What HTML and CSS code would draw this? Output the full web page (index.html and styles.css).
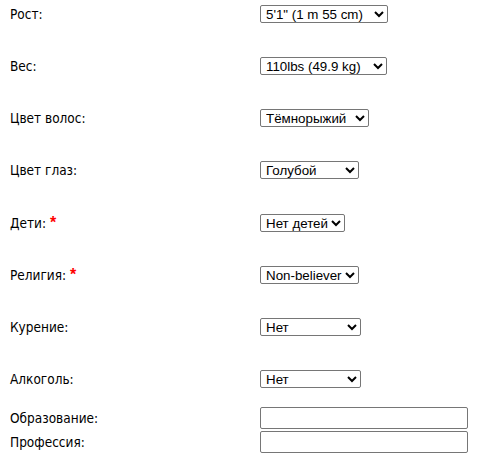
FILE: index.html
```html
<!DOCTYPE html>
<html>
<head>
<meta charset="utf-8">
<link rel="stylesheet" href="styles.css">
</head>
<body>
<div class="form">
  <div class="row"><div class="label">Рост:</div><div class="field"><select class="w128"><option>5'1" (1 m 55 cm)</option></select></div></div>
  <div class="row"><div class="label">Вес:</div><div class="field"><select class="w127"><option>110lbs (49.9 kg)</option></select></div></div>
  <div class="row"><div class="label">Цвет волос:</div><div class="field"><select class="w109"><option>Тёмнорыжий</option></select></div></div>
  <div class="row"><div class="label">Цвет глаз:</div><div class="field"><select class="w99"><option>Голубой</option></select></div></div>
  <div class="row"><div class="label">Дети: <span class="req">*</span></div><div class="field"><select class="w85"><option>Нет детей</option></select></div></div>
  <div class="row"><div class="label">Религия: <span class="req">*</span></div><div class="field"><select class="w99"><option>Non-believer</option></select></div></div>
  <div class="row"><div class="label">Курение:</div><div class="field"><select class="w101"><option>Нет</option></select></div></div>
  <div class="row last"><div class="label">Алкоголь:</div><div class="field"><select class="w101"><option>Нет</option></select></div></div>
  <div class="row short"><div class="label">Образование:</div><div class="field"><input type="text" class="txt"></div></div>
  <div class="row short"><div class="label">Профессия:</div><div class="field"><input type="text" class="txt"></div></div>
</div>
</body>
</html>
```
FILE: styles.css
```css
body {
  margin: 0;
  background: #fff;
  font-family: "DejaVu Sans Condensed", "DejaVu Sans", Tahoma, sans-serif;
  font-size: 13.5px;
  color: #000;
}
.form {
  display: flex;
  flex-direction: column;
  padding-left: 10px;
}
.row {
  display: grid;
  grid-template-columns: 250px 1fr;
  grid-template-rows: 18px;
  align-items: center;
  align-content: start;
  box-sizing: border-box;
  padding-top: 5px;
  height: 52.15px;
  flex: none;
}
.row.last {
  height: 42px;
}
.row.short {
  padding-top: 0;
  grid-template-rows: 22px;
  height: 24px;
}
.field {
  display: flex;
  align-items: center;
}
.label {
  line-height: 15px;
  padding-top: 1px;
}
.req {
  color: #ff0000;
  font-weight: bold;
  font-size: 16px;
  line-height: 15px;
  font-family: "Liberation Sans", Arial, sans-serif;
}
select {
  font-family: "Liberation Sans", Arial, sans-serif;
  font-size: 13.33px;
  height: 18px;
  border: 1px solid #767676;
  border-radius: 2px;
  background: #fff;
  color: #000;
  padding: 0 0 0 1px;
  margin: 0;
}
.w128 { width: 128px; }
.w127 { width: 127px; }
.w109 { width: 109px; }
.w99 { width: 99px; }
.w85 { width: 85px; }
.w101 { width: 101px; }
.txt {
  width: 208px;
  height: 22px;
  box-sizing: border-box;
  border: 1px solid #767676;
  border-radius: 2px;
  margin: 0;
  padding: 1px 2px;
}
```
